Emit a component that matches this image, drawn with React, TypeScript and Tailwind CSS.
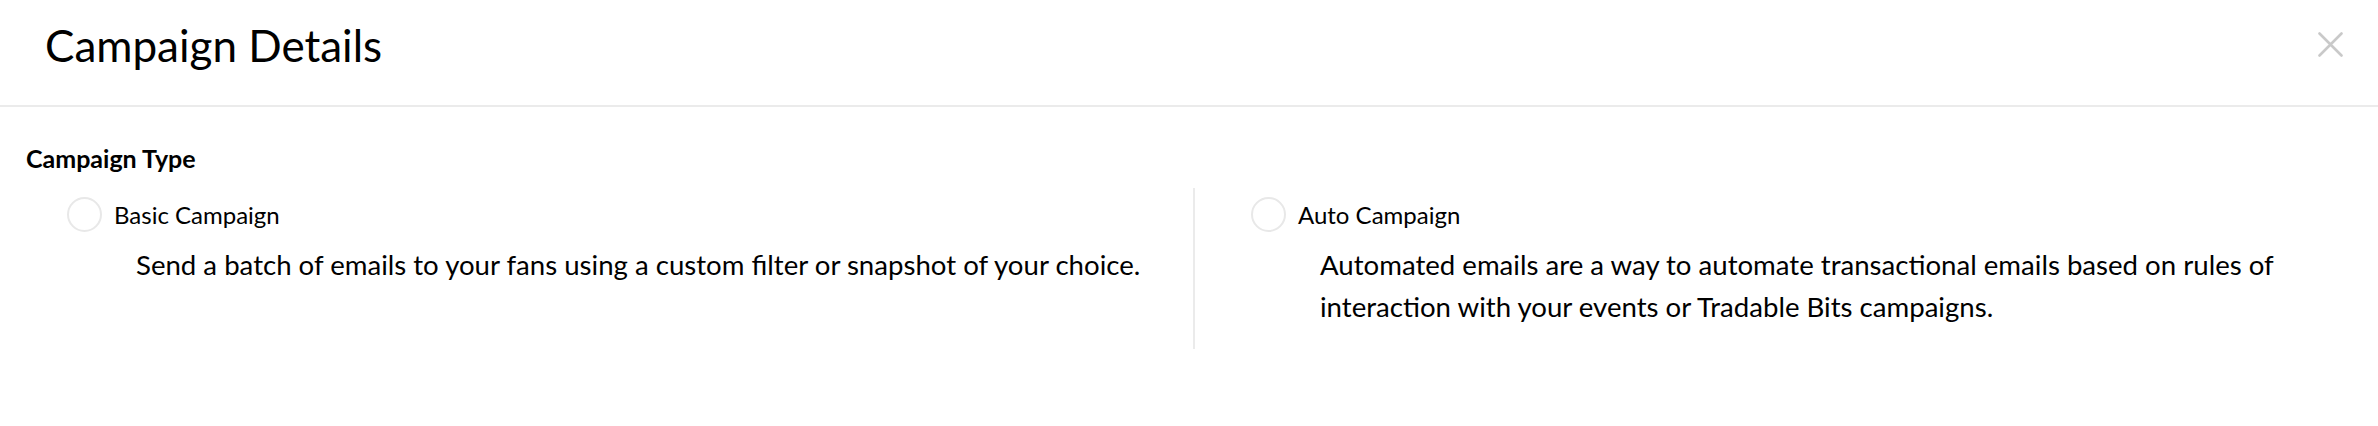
import React from "react";

interface CampaignOption {
  id: string;
  label: string;
  description: string;
}

const options: CampaignOption[] = [
  {
    id: "basic",
    label: "Basic Campaign",
    description:
      "Send a batch of emails to your fans using a custom filter or snapshot of your choice.",
  },
  {
    id: "auto",
    label: "Auto Campaign",
    description:
      "Automated emails are a way to automate transactional emails based on rules of interaction with your events or Tradable Bits campaigns.",
  },
];

function OptionBlock({ option }: { option: CampaignOption }) {
  return (
    <div>
      <label className="flex items-center gap-[12px] cursor-pointer">
        <span className="w-[35px] h-[35px] rounded-full border-2 border-[#e8e8e8] bg-white shrink-0" />
        <span className="text-[24px] leading-[28px] text-black">{option.label}</span>
      </label>
      <p className="ml-[69px] mt-[12px] text-[27.6px] leading-[42px] text-black">
        {option.description}
      </p>
    </div>
  );
}

export default function App() {
  return (
    <div
      className="w-full bg-white min-h-[426px]"
      style={{ fontFamily: "Lato, 'Noto Sans', sans-serif" }}
    >
      <div className="h-[107px] flex items-start justify-between pl-[45px] pr-[35px] border-b-2 border-[#ebebeb]">
        <h1 className="mt-[19px] text-[44px] leading-[53px] font-normal text-black">
          Campaign Details
        </h1>
        <button type="button" className="mt-[32px] w-[25px] h-[25px]" aria-label="Close">
          <svg viewBox="0 0 25 25" width="25" height="25">
            <path
              d="M1.5 1.5 L23.5 23.5 M23.5 1.5 L1.5 23.5"
              stroke="#c9c9c9"
              strokeWidth="2.6"
              strokeLinecap="round"
            />
          </svg>
        </button>
      </div>

      <div className="px-[26px] pt-[37px]">
        <h2 className="text-[25px] leading-[28px] font-bold text-black">Campaign Type</h2>
        <div className="mt-[16px] grid grid-cols-[1167px_1fr]">
          <div className="pl-[41px] pt-[9px] pb-[21px]">
            <OptionBlock option={options[0]} />
          </div>
          <div className="border-l-2 border-[#ebebeb] pl-[56px] pt-[9px] pb-[21px]">
            <OptionBlock option={options[1]} />
          </div>
        </div>
      </div>
    </div>
  );
}
